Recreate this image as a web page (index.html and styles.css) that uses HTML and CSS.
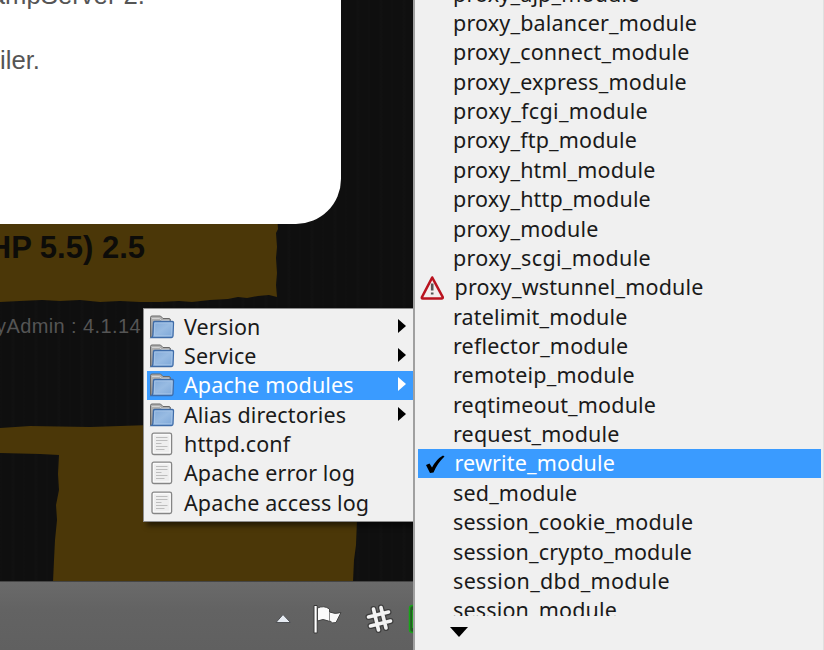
FILE: index.html
```html
<!DOCTYPE html>
<html lang="en">
<head>
<meta charset="utf-8">
<title>WampServer menu</title>
<link rel="stylesheet" href="styles.css">
</head>
<body>
<svg class="defs" width="0" height="0" aria-hidden="true">
  <defs>
    <linearGradient id="fold" x1="0" y1="0" x2="1" y2="1"><stop offset="0" stop-color="#7fa8d8"/><stop offset=".5" stop-color="#98bbe2"/><stop offset="1" stop-color="#7ba6d8"/></linearGradient>
    <linearGradient id="back" x1="0" y1="0" x2="0" y2="1"><stop offset="0" stop-color="#b4b4b4"/><stop offset="1" stop-color="#8c8c8c"/></linearGradient>
    <symbol id="folder" viewBox="0 0 26 24">
      <path d="M1.500 22.500V2.500Q1.500 1 3 1H11.500L14 3.500H20Q21.500 3.500 21.500 5.500V22.500Z" fill="url(#back)" stroke="#686868"/>
      <path d="M3 3.500H10.500L12.500 5.500H20" fill="none" stroke="#d2d2d2"/>
      <path d="M4.500 7.500Q4.500 6.500 5.500 6.500H23.500Q24.500 6.500 24.500 7.500L24 21Q23.900 22.500 22.500 22.500H2.500Q3.800 21.500 3.900 20Z" fill="url(#fold)" stroke="#3f6ca8" stroke-width="1.300"/>
      <path d="M5.800 8H23.100L22.600 20.800H5.400Z" fill="none" stroke="#a9c7e9" stroke-width=".8"/>
    </symbol>
    <symbol id="doc" viewBox="0 0 26 24">
      <rect x="3" y="1.200" width="19.600" height="21.300" rx="1.800" fill="#fafafa" stroke="#858585" stroke-width="1.300"/>
      <rect x="5.100" y="3.300" width="15.400" height="17" fill="#eee"/>
      <path d="M7 5.500H18.500M7 8.500H18.500M7 11.500H12.500M7 14.500H18.500M7 17.500H15.500" stroke="#bdbdbd" stroke-width="1.200"/>
    </symbol>
  </defs>
</svg>
<div class="screen">
  <svg class="paint" viewBox="0 0 414 582" width="414" height="582" aria-hidden="true">
    <path fill="#4b3708" d="M0 215H277L278 229 276 233 277 247 276 258 277 273 276 285 277 297 269 295 258 296 247 298 238 297 228 299 210 300 192 302 179 301 160 302 140 302 120 301 100 302 80 300 60 301 42 300 20 301 0 302Z"/>
    <path fill="#4b3708" d="M0 428L30 426 90 427 150 425 359 424 358 460 357 520 356 545 354 560 353 582H53L54 560 55 540 57 520 56 505 59 490 58 474 59 455 40 454 0 453Z"/>
  </svg>
  <main class="card">
    <p class="line line-top">WampServer 2.</p>
    <p class="line">compiler.</p>
  </main>
  <h1 class="release">(PHP 5.5) 2.5</h1>
  <p class="version">phpMyAdmin : 4.1.14</p>

  <footer class="taskbar">
    <svg width="150" height="50" viewBox="264 594 150 50">
      <path d="M276 621.500L283 613.500 290.500 621.500Z" fill="#e6ebf2" stroke="#4f5154"/>
      <path d="M314 604.500H317.200V632H314Z" fill="#fff" stroke="#383838"/>
      <path d="M317.500 607Q324 604 329.500 608V611Q335 613.500 341 611.500L336 621.500Q332 623 330 620H328.500Q323 617 317.500 620Z" fill="#fafafa" stroke="#444"/>
      <path d="M329.500 611V620" stroke="#888"/>
      <g fill="none" stroke-linecap="round"><path d="M373.500 608L378.500 629M381 606.500L386 627M368.500 616L388.500 611M370.500 625L390.500 620" stroke="#3d3d3d" stroke-width="6"/><path d="M373.500 608L378.500 629M381 606.500L386 627M368.500 616L388.500 611M370.500 625L390.500 620" stroke="#f3f3f3" stroke-width="3.600"/></g>
      <rect x="409.500" y="604.500" width="18" height="27" rx="3" fill="#245a24" stroke="#19a519" stroke-width="1.500"/><path d="M413 609V627" stroke="#1bb51b" stroke-width="1.500"/>
    </svg>
  </footer>

  <nav class="menu apache">
    <a class="row"><svg class="ico"><use href="#folder"/></svg><span>Version</span><i class="arrow"></i></a>
    <a class="row"><svg class="ico"><use href="#folder"/></svg><span>Service</span><i class="arrow"></i></a>
    <a class="row active"><svg class="ico"><use href="#folder"/></svg><span>Apache modules</span><i class="arrow"></i></a>
    <a class="row"><svg class="ico"><use href="#folder"/></svg><span>Alias directories</span><i class="arrow"></i></a>
    <a class="row"><svg class="ico"><use href="#doc"/></svg><span>httpd.conf</span></a>
    <a class="row"><svg class="ico"><use href="#doc"/></svg><span>Apache error log</span></a>
    <a class="row"><svg class="ico"><use href="#doc"/></svg><span>Apache access log</span></a>
  </nav>

  <nav class="menu modules">
    <div class="list">
      <a class="row"><span>proxy_ajp_module</span></a>
      <a class="row"><span>proxy_balancer_module</span></a>
      <a class="row"><span>proxy_connect_module</span></a>
      <a class="row"><span>proxy_express_module</span></a>
      <a class="row wide"><span>proxy_fcgi_module</span></a>
      <a class="row"><span>proxy_ftp_module</span></a>
      <a class="row"><span>proxy_html_module</span></a>
      <a class="row"><span>proxy_http_module</span></a>
      <a class="row"><span>proxy_module</span></a>
      <a class="row wide"><span>proxy_scgi_module</span></a>
      <a class="row marked"><svg class="mark" viewBox="0 0 30 29"><path d="M14.200 4.500L24.700 24Q25 25.500 23.700 25.500H4.700Q3.500 25.500 4 24Z" fill="#f3eeee" stroke="#b9131f" stroke-width="2.600" stroke-linejoin="round"/><path d="M14.200 10.500V17.500M14.200 19.500V21.500" stroke="#555" stroke-width="2.600"/></svg><span>proxy_wstunnel_module</span></a>
      <a class="row"><span>ratelimit_module</span></a>
      <a class="row"><span>reflector_module</span></a>
      <a class="row"><span>remoteip_module</span></a>
      <a class="row"><span>reqtimeout_module</span></a>
      <a class="row"><span>request_module</span></a>
      <a class="row marked active"><svg class="mark" viewBox="0 0 30 29"><path d="M8 16L11.500 14.500 14 18.500Q18.500 10 25 6.500L26.500 7.500Q19.500 14 15.500 23.500L12 24Z" fill="#000"/></svg><span>rewrite_module</span></a>
      <a class="row"><span>sed_module</span></a>
      <a class="row"><span>session_cookie_module</span></a>
      <a class="row"><span>session_crypto_module</span></a>
      <a class="row wide"><span>session_dbd_module</span></a>
      <a class="row"><span>session_module</span></a>
    </div>
    <i class="more"></i>
  </nav>
</div>
</body>
</html>
```
FILE: styles.css
```css
* { box-sizing: border-box; }
body { margin: 0; }
.defs { position: absolute; }
.screen {
  position: relative;
  width: 824px;
  height: 650px;
  overflow: hidden;
  background:
    repeating-linear-gradient(90deg, rgba(255,255,255,.005) 0 2px, transparent 3px 11px, rgba(255,255,255,.006) 12px 14px, transparent 15px 23px),
    #0f0f0f;
  font-family: "Liberation Sans", Arial, sans-serif;
}
.paint { position: absolute; left: 0; top: 0; }
.card {
  position: absolute;
  left: -200px;
  top: -60px;
  width: 541px;
  height: 284px;
  border-radius: 0 0 45px 0;
  background: #fff;
  color: #555;
}
.line {
  position: absolute;
  right: 301px;
  top: 105px;
  margin: 0;
  font-size: 25.7px;
  line-height: 30px;
}
.line-top { right: 196px; top: 40px; }
.release {
  position: absolute;
  right: 679px;
  top: 230px;
  margin: 0;
  font-size: 31px;
  line-height: 36px;
  color: #0d0c09;
  white-space: nowrap;
}
.version {
  position: absolute;
  right: 683px;
  top: 313px;
  margin: 0;
  font-size: 20px;
  letter-spacing: .4px;
  line-height: 26px;
  color: #555;
  white-space: nowrap;
}
.taskbar {
  position: absolute;
  left: 0;
  top: 581px;
  width: 414px;
  height: 69px;
  padding: 13px 0 0 264px;
  border-top: 1px solid #454545;
  background: linear-gradient(#6a6a6a, #636363 40%, #606060);
}
.menu {
  position: absolute;
  background: #f0f0f0;
  color: #1a1a1a;
  font-family: "Noto Sans", sans-serif;
  font-size: 21.5px;
}
.apache {
  left: 143px;
  top: 308px;
  width: 271px;
  height: 214px;
  padding: 3px 0 0 3px;
  border: 1px solid #8d8d8d;
  box-shadow: 4px 4px 5px rgba(0,0,0,.5);
  letter-spacing: .12px;
}
.modules {
  left: 413px;
  top: -24px;
  width: 411px;
  height: 674px;
  padding: 3px 2px 0 2.5px;
  border-left: 2px solid #a0a0a0;
  border-right: 1px solid #e0e0e0;
  letter-spacing: .17px;
}
.list { height: 637px; overflow: hidden; }
.row {
  display: flex;
  align-items: center;
  height: 29.37px;
  white-space: nowrap;
}
.row span { margin-top: -1px; }
.row.wide { letter-spacing: .33px; }
.row.active { background: #3a9bff; color: #fff; }
.ico { width: 26px; height: 24px; margin: 0 9px 0 2px; flex: none; }
.arrow {
  margin: -2px 7px 0 auto;
  border: 7px solid transparent;
  border-left: 8px solid #000;
  border-right: 0;
}
.active .arrow { border-left-color: #fff; }
.modules .row { padding-left: 35.5px; }
.modules .marked { padding-left: 0; }
.mark { width: 30px; height: 29px; margin-right: 7px; flex: none; }
.more {
  display: block;
  width: 0;
  margin: 11px 0 0 32.5px;
  border: 9.5px solid transparent;
  border-top: 10px solid #000;
  border-bottom: 0;
}
```
